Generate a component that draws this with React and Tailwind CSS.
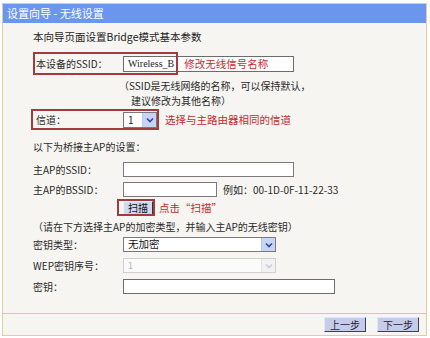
import React from "react";

const FONT = { fontFamily: '"Noto Sans CJK SC", "Liberation Sans", sans-serif' };

const Arrow = ({ disabled }) => (
  <span
    className={`flex h-full w-[14px] items-center justify-center border-l ${
      disabled ? "border-[#e2e2e2] bg-[#f2f2f2]" : "border-[#b9c8ea] bg-[#c6d4f5]"
    }`}
  >
    <svg width="8" height="6" viewBox="0 0 8 6">
      <path
        d="M1 1.5 L4 4.5 L7 1.5"
        fill="none"
        stroke={disabled ? "#c9ccd6" : "#34489a"}
        strokeWidth="1.6"
      />
    </svg>
  </span>
);

const Label = ({ children }) => (
  <span className="w-[90px] shrink-0 text-[10px] leading-none text-[#2a2a2a]">{children}</span>
);

const Row = ({ label, children, className = "" }) => (
  <div className={`flex items-center pl-[30px] ${className}`}>
    <Label>{label}</Label>
    {children}
  </div>
);

const StepButton = ({ children }) => (
  <button className="flex h-[15px] w-[42px] items-center justify-center border border-t-[#e4e6f4] border-l-[#e4e6f4] border-b-[#3d3d55] border-r-[#3d3d55] bg-[#c7cbea] text-[10px] leading-none text-[#1e1e2e]">
    {children}
  </button>
);

export default function App() {
  return (
    <div className="h-[338px] w-[430px] bg-white pb-[2px] pl-[2px] pr-[3px] pt-[3px]" style={FONT}>
      <div className="flex h-full flex-col border border-[#e2cc9b] bg-[#f6f5f1]">
        {/* title */}
        <div className="flex h-[19px] shrink-0 items-center bg-[#6b96ee] pl-[4px] text-[11px] text-white">
          设置向导 - 无线设置
        </div>

        <div className="flex flex-1 flex-col">
          <div className="mt-[6px] flex h-[16px] items-center pl-[30px] text-[10.5px] text-[#1c1c1c]">
            本向导页面设置Bridge模式基本参数
          </div>

          {/* ssid */}
          <div className="relative mt-[7px] flex h-[23px] items-center pl-[33px]">
            <span className="w-[87px] shrink-0 text-[10px] leading-none text-[#2a2a2a]">本设备的SSID：</span>
            <div className="flex h-[16px] w-[171px] items-center border border-[#6c6c6c] bg-white pl-[4px]">
              <span className="text-[10px] text-[#222]" style={{ fontFamily: '"Liberation Serif", serif' }}>
                Wireless_B
              </span>
              <span className="ml-[10px] text-[10.5px] text-[#c8282e]">修改无线信号名称</span>
            </div>
            <div className="absolute left-[30px] top-0 h-[23px] w-[145px] border-2 border-[#a33a3e]" />
          </div>

          <div className="mt-[3px] pl-[116px] text-[10px] leading-[15px] text-[#2a2a2a]">
            （SSID是无线网络的名称，可以保持默认，
          </div>
          <div className="pl-[128px] text-[10px] leading-[15px] text-[#2a2a2a]">建议修改为其他名称）</div>

          {/* channel */}
          <div className="relative mt-[1px] flex h-[21px] items-center pl-[33px]">
            <span className="w-[87px] shrink-0 text-[10px] leading-none text-[#2a2a2a]">信道：</span>
            <div className="flex h-[16px] w-[34px] items-center border border-[#7a7a7a] bg-white">
              <span className="flex-1 pl-[4px] text-[10px] leading-none text-[#222]">1</span>
              <Arrow />
            </div>
            <span className="ml-[8px] text-[10.5px] text-[#c8282e]">选择与主路由器相同的信道</span>
            <div className="absolute left-[28px] top-0 h-[21px] w-[128px] border-2 border-[#a33a3e]" />
          </div>

          <div className="mt-[9px] flex h-[14px] items-center pl-[30px] text-[10px] text-[#2a2a2a]">
            以下为桥接主AP的设置：
          </div>

          <Row label="主AP的SSID：" className="mt-[9px] h-[15px]">
            <div className="h-[15px] w-[171px] border border-[#7a7a7a] bg-white" />
          </Row>

          <Row label="主AP的BSSID：" className="mt-[5px] h-[15px]">
            <div className="h-[15px] w-[94px] border border-[#7a7a7a] bg-white" />
            <span className="ml-[6px] text-[10px] text-[#2a2a2a]">例如：00-1D-0F-11-22-33</span>
          </Row>

          {/* scan */}
          <div className="relative mt-[2px] flex h-[17px] items-center pl-[120px]">
            <button className="flex h-[14px] w-[30px] items-center justify-center border border-t-[#eef0f8] border-l-[#eef0f8] border-b-[#333] border-r-[#333] bg-[#d3d7ef] text-[10px] leading-none text-[#111]">
              扫描
            </button>
            <span className="ml-[6px] text-[10.5px] text-[#c8282e]">点击“扫描”</span>
            <div className="absolute left-[114px] top-0 h-[17px] w-[38px] border-2 border-[#a33a3e]" />
          </div>

          <div className="mt-[3px] flex h-[14px] items-center pl-[30px] text-[10px] text-[#2a2a2a]">
            （请在下方选择主AP的加密类型，并输入主AP的无线密钥）
          </div>

          <Row label="密钥类型：" className="mt-[4px] h-[15px]">
            <div className="flex h-[15px] w-[153px] items-center border border-[#7a7a7a] bg-white">
              <span className="flex-1 pl-[4px] text-[10.5px] leading-none text-[#111]">无加密</span>
              <Arrow />
            </div>
          </Row>

          <Row label="WEP密钥序号：" className="mt-[6px] h-[15px]">
            <div className="flex h-[15px] w-[153px] items-center border border-[#cfcfcf] bg-[#fbfbfb]">
              <span className="flex-1 pl-[4px] text-[9px] leading-none text-[#b5b5b5]">1</span>
              <Arrow disabled />
            </div>
          </Row>

          <Row label="密钥：" className="mt-[6px] h-[15px]">
            <div className="h-[15px] w-[212px] border border-[#6c6c6c] bg-white" />
          </Row>
        </div>

        {/* footer */}
        <div className="flex h-[22px] shrink-0 items-center justify-end gap-[11px] border-t border-[#dcc799] pr-[7px]">
          <StepButton>上一步</StepButton>
          <StepButton>下一步</StepButton>
        </div>
      </div>
    </div>
  );
}
